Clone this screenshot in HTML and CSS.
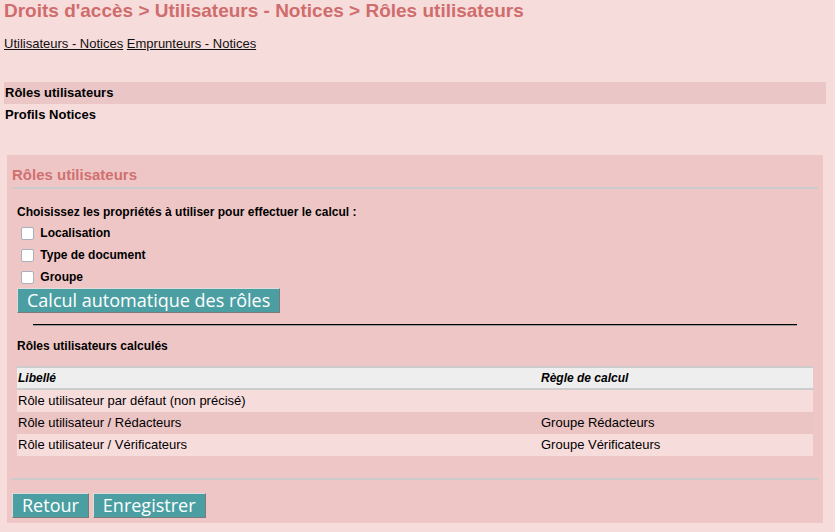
FILE: index.html
```html
<!DOCTYPE html>
<html lang="fr">
<head>
<meta charset="utf-8">
<title>Rôles utilisateurs</title>
<link rel="stylesheet" href="styles.css">
</head>
<body>
<h1 class="page-title">Droits d'accès &gt; Utilisateurs - Notices &gt; Rôles utilisateurs</h1>
<div class="tabs"><a href="#">Utilisateurs - Notices</a> <a href="#">Emprunteurs - Notices</a></div>
<ul class="menu">
  <li class="menu-item active">Rôles utilisateurs</li>
  <li class="menu-item">Profils Notices</li>
</ul>
<div class="panel">
  <h3 class="panel-title">Rôles utilisateurs</h3>
  <div class="panel-body">
    <p class="intro">Choisissez les propriétés à utiliser pour effectuer le calcul :</p>
    <label class="check-row"><input type="checkbox" class="check"> Localisation</label>
    <label class="check-row"><input type="checkbox" class="check"> Type de document</label>
    <label class="check-row"><input type="checkbox" class="check"> Groupe</label>
    <div><button class="btn" type="button">Calcul automatique des rôles</button></div>
    <hr class="sep">
    <p class="subtitle">Rôles utilisateurs calculés</p>
    <table class="roles">
      <thead>
        <tr><th class="col-label">Libellé</th><th>Règle de calcul</th></tr>
      </thead>
      <tbody>
        <tr class="odd"><td>Rôle utilisateur par défaut (non précisé)</td><td></td></tr>
        <tr class="even"><td>Rôle utilisateur / Rédacteurs</td><td>Groupe Rédacteurs</td></tr>
        <tr class="odd"><td>Rôle utilisateur / Vérificateurs</td><td>Groupe Vérificateurs</td></tr>
      </tbody>
    </table>
  </div>
  <div class="panel-footer">
    <button class="btn" type="button">Retour</button> <button class="btn" type="button">Enregistrer</button>
  </div>
</div>
</body>
</html>
```

FILE: styles.css
```css
html, body {
  margin: 0;
  background: #f7dcdc;
}
body {
  padding: 0 9px 0 4px;
  font-family: "Liberation Sans", Arial, sans-serif;
  font-size: 12px;
  color: #000;
}
.page-title {
  margin: 0;
  font-size: 19px;
  line-height: 21px;
  font-weight: bold;
  color: #cf6c6c;
}
.tabs {
  margin-top: 15px;
  font-size: 13px;
  line-height: 15px;
}
.tabs a {
  color: #111;
  text-decoration: underline;
}
.menu {
  list-style: none;
  margin: 31px 0 0 0;
  padding: 0;
}
.menu-item {
  height: 22px;
  line-height: 22px;
  padding-left: 1px;
  font-size: 13px;
  font-weight: bold;
}
.menu-item.active {
  background: #ebc6c6;
}
.panel {
  margin: 29px 3px 0 3px;
  padding: 11px 5px 5px 5px;
  background: #efc6c6;
}
.panel-title {
  margin: 0;
  padding-bottom: 4px;
  font-size: 15px;
  line-height: 17px;
  font-weight: bold;
  color: #d07070;
  border-bottom: 2px solid #cccaca;
}
.panel-body {
  padding: 16px 5px 0 5px;
}
.intro {
  margin: 0 0 2px 0;
  line-height: 15px;
  font-weight: bold;
}
.check-row {
  display: flex;
  align-items: center;
  height: 22px;
  font-weight: bold;
  white-space: pre;
}
.check {
  appearance: none;
  -webkit-appearance: none;
  width: 13px;
  height: 13px;
  margin: 1px 3px 0 4px;
  background: #fff;
  border: 1px solid #a7b0bc;
  border-radius: 2px;
}
.btn {
  display: inline-block;
  height: 25px;
  margin: 0;
  padding: 0 9px;
  font-family: "Open Sans", "Noto Sans", sans-serif;
  font-size: 18px;
  line-height: 23px;
  color: #fff;
  background: #4b9fa3;
  border: 1px solid;
  border-color: #dcdcdc #7a7a7a #7a7a7a #dcdcdc;
  border-radius: 0;
  vertical-align: top;
}
.sep {
  width: 96%;
  margin: 11px auto 0 auto;
  height: 0;
  border: 0;
  border-top: 1px solid #000;
  border-bottom: 1px solid #9a9a9a;
}
.subtitle {
  margin: 13px 0 0 0;
  line-height: 15px;
  font-weight: bold;
}
.roles {
  width: 100%;
  margin-top: 12px;
  border-collapse: collapse;
}
.roles th {
  text-align: left;
  font-weight: bold;
  font-style: italic;
  line-height: 20px;
  padding: 0 1px;
  background: #eeeeee;
  border-top: 2px solid #cccccc;
  border-bottom: 2px solid #cccccc;
}
.roles .col-label {
  width: 521px;
}
.roles td {
  font-size: 13px;
  line-height: 16px;
  padding: 3px 1px 3px 1px;
}
.roles .odd {
  background: #f7dcdc;
}
.roles .even {
  background: #ebc4c4;
}
.panel-footer {
  margin-top: 22px;
  padding-top: 13px;
  border-top: 2px solid #cccaca;
  font-size: 0;
}
.panel-footer .btn + .btn {
  margin-left: 4px;
}
```
